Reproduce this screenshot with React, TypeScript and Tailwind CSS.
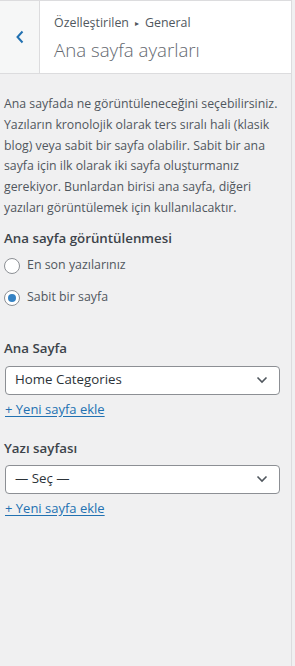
import React from "react";

const font = { fontFamily: '"Open Sans", "Noto Sans", sans-serif' };

function Chevron() {
  return (
    <svg width="12" height="8" viewBox="0 0 12 8" className="shrink-0">
      <polyline points="1.5,1.5 6,6 10.5,1.5" fill="none" stroke="#50575e" strokeWidth="1.6" />
    </svg>
  );
}

function Select({ value }: { value: string }) {
  return (
    <div className="ml-[5px] w-[275px] h-[29px] bg-white border border-[#8c8f94] rounded-[4px] flex items-center justify-between pl-[9px] pr-[11px]">
      <span className="text-[13.3px] text-[#2c3338]">{value}</span>
      <Chevron />
    </div>
  );
}

function Radio({ checked, label }: { checked?: boolean; label: string }) {
  return (
    <div className="flex items-center h-[20px]">
      <span className="ml-[4px] w-[16px] h-[16px] rounded-full border border-[#8c8f94] bg-white flex items-center justify-center">
        {checked && <span className="w-[8px] h-[8px] rounded-full bg-[#3582c4]" />}
      </span>
      <span className="ml-[7px] text-[12.4px] text-[#50575e]">{label}</span>
    </div>
  );
}

function Link() {
  return (
    <div className="pl-[5px] text-[13px] leading-[18px]">
      <a className="text-[#2271b1] underline underline-offset-[2px]">+ Yeni sayfa ekle</a>
    </div>
  );
}

export default function App() {
  return (
    <div style={font} className="w-[295px] h-[666px] bg-[#f0f0f1] overflow-hidden">
      <div className="w-[292px] h-[666px] border-r border-[#dcdcde] bg-[#f0f0f1] flex flex-col">
        <div className="h-[74px] shrink-0 bg-white border-t border-b border-[#dcdcde] flex">
          <div className="w-[40px] h-full bg-[#f6f7f7] border-r border-[#dcdcde] flex items-center justify-center">
            <svg width="10" height="14" viewBox="0 0 10 14">
              <polyline points="7.5,1.5 2.5,7 7.5,12.5" fill="none" stroke="#2271b1" strokeWidth="2" />
            </svg>
          </div>
          <div className="pl-[14px] pt-[13px]">
            <div className="text-[12.4px] text-[#50575e] leading-[18px] flex items-center">
              Özelleştirilen
              <span className="mx-[6px] text-[8px] text-[#50575e]">▸</span>
              General
            </div>
            <div className="text-[18.7px] font-[300] text-[#646970] leading-[26px] mt-[5px]">Ana sayfa ayarları</div>
          </div>
        </div>

        <div className="pl-[4px] w-[284px] pt-[20px] text-[12.3px] leading-[20.8px] text-[#50575e]">
          Ana sayfada ne görüntüleneceğini seçebilirsiniz. Yazıların kronolojik olarak ters sıralı hali (klasik blog) veya sabit bir sayfa olabilir. Sabit bir ana sayfa için ilk olarak iki sayfa oluşturmanız gerekiyor. Bunlardan birisi ana sayfa, diğeri yazıları görüntülemek için kullanılacaktır.
        </div>

        <div className="pl-[4px] mt-[9px] text-[13.3px] font-semibold text-[#3c434a] leading-[20px]">Ana sayfa görüntülenmesi</div>
        <div className="mt-[8px]">
          <Radio label="En son yazılarınız" />
        </div>
        <div className="mt-[12px]">
          <Radio checked label="Sabit bir sayfa" />
        </div>

        <div className="pl-[4px] mt-[30px] text-[13.3px] font-semibold text-[#3c434a] leading-[20px]">Ana Sayfa</div>
        <div className="mt-[8px]">
          <Select value="Home Categories" />
        </div>
        <div className="mt-[5px]">
          <Link />
        </div>

        <div className="pl-[4px] mt-[20px] text-[13.3px] font-semibold text-[#3c434a] leading-[20px]">Yazı sayfası</div>
        <div className="mt-[7px]">
          <Select value="— Seç —" />
        </div>
        <div className="mt-[5px]">
          <Link />
        </div>
      </div>
    </div>
  );
}
